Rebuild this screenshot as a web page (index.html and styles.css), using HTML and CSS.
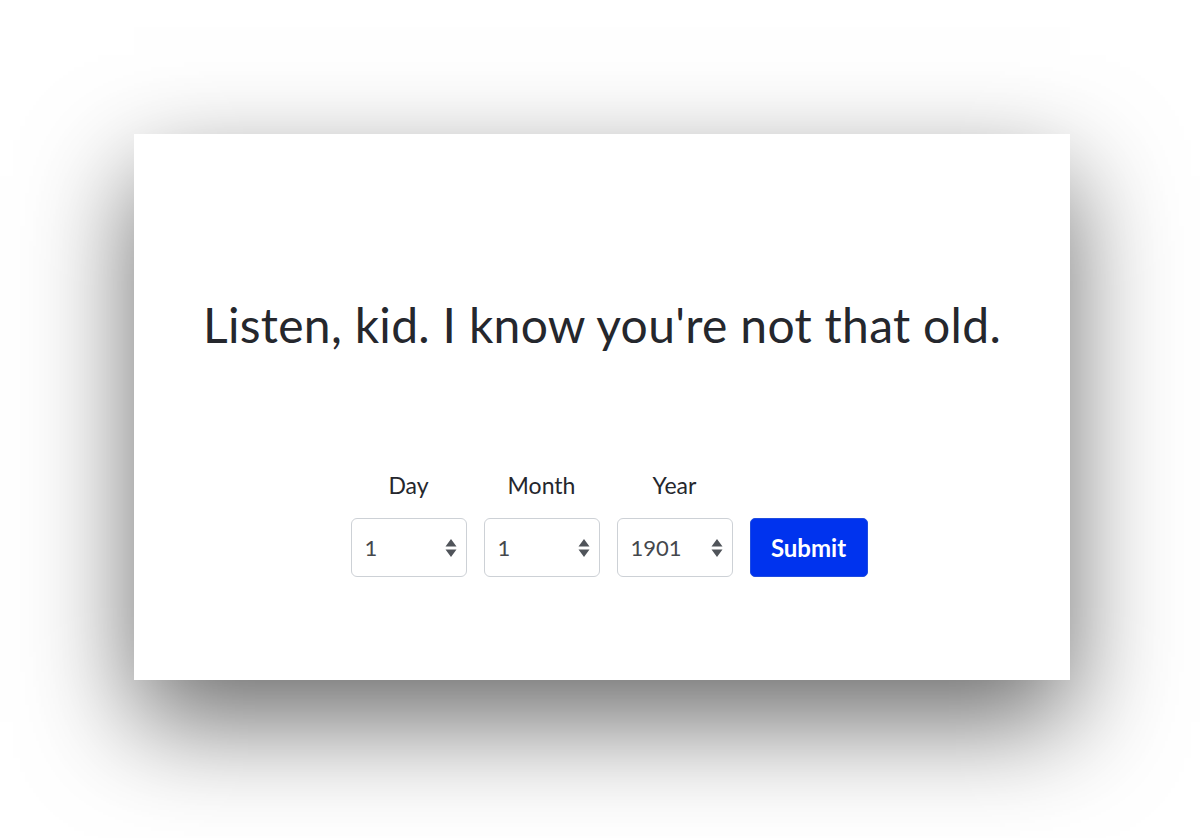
FILE: index.html
```html
<!DOCTYPE html>
<html lang="en">
<head>
    <meta charset="UTF-8">
    <meta name="viewport" content="width=device-width, initial-scale=1.0">
    <title>Age Gate</title>
    <link rel="stylesheet" href="styles.css">
</head>
<body>
    <div class="stage">
        <!-- card -->
        <main class="card">
            <h1 class="title">Listen, kid. I know you're not that old.</h1>

            <!-- birth date form -->
            <form class="dob-form">
                <div class="field">
                    <label class="field-label">Day</label>
                    <div class="select-wrap">
                        <select class="select"><option>1</option></select>
                        <svg class="select-arrows" width="12" height="18" viewBox="0 0 12 18"><path d="M6 0 L11.5 7.5 H0.5 Z M6 18 L11.5 10.5 H0.5 Z" fill="#50545a"/></svg>
                    </div>
                </div>
                <div class="field">
                    <label class="field-label">Month</label>
                    <div class="select-wrap">
                        <select class="select"><option>1</option></select>
                        <svg class="select-arrows" width="12" height="18" viewBox="0 0 12 18"><path d="M6 0 L11.5 7.5 H0.5 Z M6 18 L11.5 10.5 H0.5 Z" fill="#50545a"/></svg>
                    </div>
                </div>
                <div class="field">
                    <label class="field-label">Year</label>
                    <div class="select-wrap">
                        <select class="select"><option>1901</option></select>
                        <svg class="select-arrows" width="12" height="18" viewBox="0 0 12 18"><path d="M6 0 L11.5 7.5 H0.5 Z M6 18 L11.5 10.5 H0.5 Z" fill="#50545a"/></svg>
                    </div>
                </div>
                <button type="button" class="submit">Submit</button>
            </form>
        </main>
    </div>
</body>
</html>
```

FILE: styles.css
```css
/* page */
body {
    margin: 0;
    background-color: #FFFFFF;
    font-family: 'Lato', 'Noto Sans', sans-serif;
    color: #25272d;
    overflow: hidden;
}

.stage {
    height: 838px;
    padding-top: 134px;
    box-sizing: border-box;
}

/* card */
.card {
    width: 936px;
    height: 546px;
    margin-left: 134px;
    background-color: #FFFFFF;
    box-shadow: 0 42px 100px rgba(0, 0, 0, 0.58);
    display: flex;
    flex-direction: column;
    align-items: center;
    box-sizing: border-box;
    padding-top: 162px;
}

.title {
    margin: 0;
    font-size: 48px;
    font-weight: 400;
    line-height: 58px;
    color: #25272d;
    letter-spacing: 0.3px;
}

/* form */
.dob-form {
    display: flex;
    align-items: flex-end;
    gap: 17px;
    margin-top: 118px;
    padding-left: 14px;
}

.field {
    display: flex;
    flex-direction: column;
    align-items: center;
    gap: 20px;
}

.field-label {
    font-size: 23px;
    line-height: 26px;
    color: #25272d;
}

.select-wrap {
    position: relative;
}

.select {
    appearance: none;
    -webkit-appearance: none;
    width: 116px;
    height: 59px;
    padding: 0 0 0 13px;
    border: 1px solid #cdd1d6;
    border-radius: 6px;
    background-color: #FFFFFF;
    font-family: inherit;
    font-size: 22px;
    color: #44474c;
    outline: none;
}

.select-arrows {
    position: absolute;
    top: 21px;
    right: 10px;
    pointer-events: none;
}

.submit {
    width: 118px;
    height: 59px;
    border: 1px solid #1f4ce0;
    border-radius: 5px;
    background-color: #0033ee;
    color: #FFFFFF;
    font-family: inherit;
    font-size: 24px;
    font-weight: 700;
    cursor: pointer;
}
```
